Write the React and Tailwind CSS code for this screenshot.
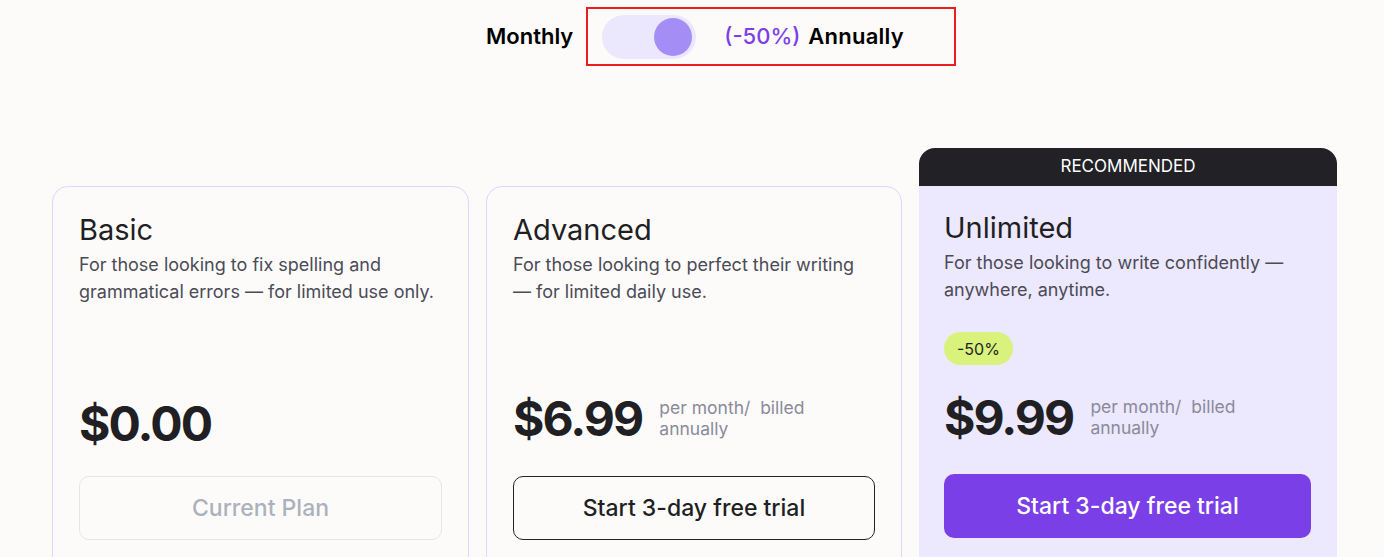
import React from "react";

const font = { fontFamily: "Inter, 'Noto Sans', sans-serif" };

const PriceRow = ({ price, note, shift }) => (
  <div className="flex items-center h-[60px] gap-[17px]">
    <span
      className={`text-[48px] leading-[60px] font-bold tracking-[-0.04em] text-[#1f1f24] ${
        shift ? "pt-[10px]" : ""
      }`}
    >
      {price}
    </span>
    {note && (
      <span className="text-[17.5px] leading-[21px] text-[#8a8a99] w-[165px] -mt-[3px]">
        per month/&nbsp; billed annually
      </span>
    )}
  </div>
);

const Toggle = () => (
  <div className="flex items-center justify-start pl-[486px] pt-[7px]">
    <span className="text-[22px] font-semibold text-black mr-[13px]">Monthly</span>
    <div className="w-[370px] h-[59px] border-2 border-[#ee1c1c] flex items-center pl-[14px]">
      <div className="w-[94px] h-[44px] rounded-full bg-[#ebe7fd] flex items-center justify-end pr-[4px]">
        <div className="w-[38px] h-[38px] rounded-full bg-[#a48ef6]" />
      </div>
      <span className="ml-[28px] text-[22px] font-medium text-[#7c3fe6]">(-50%)</span>
      <span className="ml-[8px] text-[22px] font-semibold text-black tracking-[0.01em]">Annually</span>
    </div>
  </div>
);

export default function App() {
  return (
    <div className="w-[1384px] h-[557px] overflow-hidden bg-[#fcfbfa]" style={font}>
      <Toggle />

      <div className="flex items-end gap-[17px] pl-[52px] mt-[82px]">
        {/* Basic */}
        <div className="w-[417px] h-[420px] border border-[#dcd7fb] rounded-t-[16px] px-[26px] pt-[26px] bg-[#fcfbfa]">
          <h3 className="text-[29px] leading-[34px] text-[#1f1f24]">Basic</h3>
          <p className="mt-[4px] text-[18px] leading-[27px] text-[#4b4b56]">
            For those looking to fix spelling and grammatical errors — for limited use only.
          </p>
          <div className="mt-[84px]">
            <PriceRow price="$0.00" shift />
          </div>
          <button
            type="button"
            className="mt-[27px] w-full h-[64px] rounded-[10px] border border-[#e5e6ea] text-[23px] font-medium text-[#abb2bd]"
          >
            Current Plan
          </button>
        </div>

        {/* Advanced */}
        <div className="w-[416px] h-[420px] border border-[#dcd7fb] rounded-t-[16px] px-[26px] pt-[26px] bg-[#fcfbfa]">
          <h3 className="text-[29px] leading-[34px] text-[#1f1f24]">Advanced</h3>
          <p className="mt-[4px] text-[18px] leading-[27px] text-[#4b4b56]">
            For those looking to perfect their writing — for limited daily use.
          </p>
          <div className="mt-[84px]">
            <PriceRow price="$6.99" note />
          </div>
          <button
            type="button"
            className="mt-[27px] w-full h-[64px] rounded-[10px] border border-[#222228] text-[23px] font-medium text-[#1f1f24]"
          >
            Start 3-day free trial
          </button>
        </div>

        {/* Unlimited */}
        <div className="w-[418px] h-[458px] rounded-t-[16px] overflow-hidden bg-[#ece8fd] flex flex-col">
          <div className="h-[38px] bg-[#212126] flex items-center justify-center text-[17px] text-white">
            RECOMMENDED
          </div>
          <div className="px-[25px] pt-[25px]">
            <h3 className="text-[29px] leading-[34px] text-[#1f1f24]">Unlimited</h3>
            <p className="mt-[4px] text-[18px] leading-[27px] text-[#4b4b56]">
              For those looking to write confidently — anywhere, anytime.
            </p>
            <div className="flex w-fit items-center mt-[29px] h-[33px] px-[13px] rounded-full bg-[#d8f27b] text-[16px] text-[#1f1f24]">
              -50%
            </div>
            <div className="mt-[23px]">
              <PriceRow price="$9.99" note />
            </div>
            <button
              type="button"
              className="mt-[26px] w-[367px] h-[64px] rounded-[10px] bg-[#7b3fe8] text-[23px] font-medium text-white"
            >
              Start 3-day free trial
            </button>
          </div>
        </div>
      </div>
    </div>
  );
}
